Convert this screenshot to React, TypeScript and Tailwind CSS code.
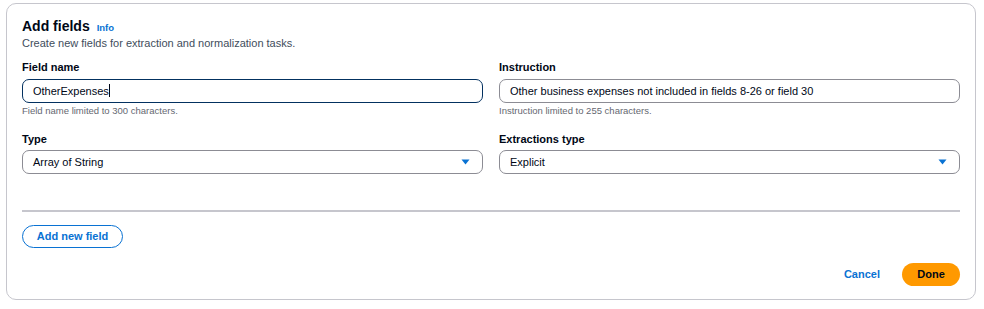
const Caret = () => <span className="inline-block w-px h-[13px] bg-[#000716] align-middle -mt-px" />

const Arrow = () => (
  <svg width="9" height="6" viewBox="0 0 9 6" className="shrink-0">
    <path d="M0.5 0.5 H8.5 L4.5 5.5 Z" fill="#0972d3" />
  </svg>
)

const Label = ({ children }: { children: React.ReactNode }) => (
  <p className="text-[11px] leading-[14px] font-bold text-[#000716]">{children}</p>
)

const Help = ({ children }: { children: React.ReactNode }) => (
  <p className="mt-[2px] text-[9.5px] leading-[12px] text-[#656871]">{children}</p>
)

export default function App() {
  return (
    <div
      className="w-[984px] h-[309px] bg-white pl-[6px] pt-[3px]"
      style={{ fontFamily: '"Liberation Sans", Arial, sans-serif' }}
    >
      <div className="w-[970px] h-[297px] border border-[#c6c6cd] rounded-[10px] px-[15px] pt-[13px] flex flex-col">
        <div className="flex items-baseline gap-[7px]">
          <h1 className="text-[14px] leading-[18px] font-bold text-[#000716]">Add fields</h1>
          <span className="text-[9.5px] font-bold text-[#0972d3]">Info</span>
        </div>
        <p className="mt-px text-[11px] leading-[14px] text-[#414d5c]">
          Create new fields for extraction and normalization tasks.
        </p>

        <div className="mt-[10px] grid grid-cols-2 gap-x-[16px] gap-y-[15px]">
          <div>
            <Label>Field name</Label>
            <div className="mt-[5px] h-[24px] border border-[#033160] rounded-[7px] px-[10px] flex items-center text-[11px] text-[#000716]">
              OtherExpenses
              <Caret />
            </div>
            <Help>Field name limited to 300 characters.</Help>
          </div>
          <div>
            <Label>Instruction</Label>
            <div className="mt-[5px] h-[24px] border border-[#8c8c94] rounded-[7px] px-[10px] flex items-center text-[11px] text-[#000716]">
              Other business expenses not included in fields 8-26 or field 30
            </div>
            <Help>Instruction limited to 255 characters.</Help>
          </div>
          <div>
            <Label>Type</Label>
            <div className="mt-[4px] h-[24px] border border-[#8c8c94] rounded-[7px] pl-[10px] pr-[12px] flex items-center justify-between text-[11px] text-[#000716]">
              <span>Array of String</span>
              <Arrow />
            </div>
          </div>
          <div>
            <Label>Extractions type</Label>
            <div className="mt-[4px] h-[24px] border border-[#8c8c94] rounded-[7px] pl-[10px] pr-[12px] flex items-center justify-between text-[11px] text-[#000716]">
              <span>Explicit</span>
              <Arrow />
            </div>
          </div>
        </div>

        <div className="mt-[36px] h-[2px] bg-[#c6c6cd]" />

        <div className="mt-[11px]">
          <button className="w-[101px] h-[23px] border border-[#0972d3] rounded-full text-[11px] font-bold text-[#0972d3]">
            Add new field
          </button>
        </div>

        <div className="mt-[15px] flex justify-end items-center gap-[14px]">
          <button className="px-[8px] h-[23px] text-[11px] font-bold text-[#0972d3]">Cancel</button>
          <button className="w-[58px] h-[23px] bg-[#ff9900] rounded-full text-[11px] font-bold text-[#000716]">
            Done
          </button>
        </div>
      </div>
    </div>
  )
}
